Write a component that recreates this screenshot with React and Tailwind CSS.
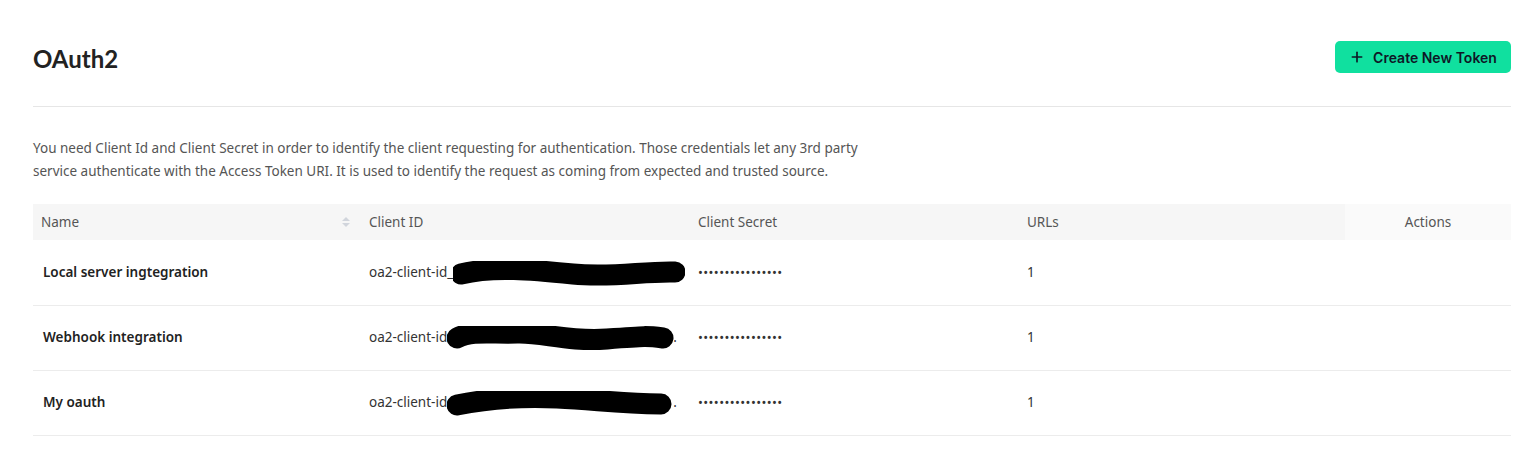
import { Plus } from "lucide-react";

const rows = [
  { name: "Local server ingtegration", prefix: "oa2-client-id_", blob: "M8 13 C 40 5, 80 9, 120 13 S 190 10, 222 11", dot: false },
  { name: "Webhook integration", prefix: "oa2-client-id", blob: "M10 12 C 25 4, 45 8, 70 7 S 120 16, 160 13 S 200 10, 216 12", dot: true },
  { name: "My oauth", prefix: "oa2-client-id", blob: "M10 14 C 40 8, 70 5, 110 7 S 170 12, 214 13", dot: true },
];

const Blob = ({ d }) => (
  <svg width="232" height="26" viewBox="0 0 232 26" className="absolute left-0 top-1/2 -translate-y-1/2">
    <path d={d} stroke="#000" strokeWidth="21" strokeLinecap="round" fill="none" />
  </svg>
);

const SortIcon = () => (
  <svg width="10" height="14" viewBox="0 0 10 14" className="text-gray-300">
    <path d="M1 6 L5 2 L9 6 Z" fill="currentColor" />
    <path d="M1 8 L5 12 L9 8 Z" fill="currentColor" />
  </svg>
);

export default function App() {
  return (
    <div className="bg-white pl-[33px] pr-[25px] pt-[40px] text-[#333]" style={{ fontFamily: '"Noto Sans", sans-serif' }}>
      {/* Header */}
      <div className="flex items-start justify-between border-b border-[#e6e6e6] pb-[29px]">
        <h1 className="mt-[1px] text-[24px] font-bold text-[#222]" style={{ fontFamily: "Lato, sans-serif" }}>
          OAuth2
        </h1>
        <button className="mt-[1px] flex h-[32px] w-[176px] items-center justify-center gap-2 rounded-[5px] bg-[#10e09f] text-[14px] font-semibold text-[#0e1726]" style={{ fontFamily: "Inter, sans-serif" }}>
          <Plus size={16} strokeWidth={2.5} />
          Create New Token
        </button>
      </div>

      {/* Description */}
      <p className="mt-[30px] max-w-[870px] text-[13.5px] leading-[23px] text-[#555]">
        You need Client Id and Client Secret in order to identify the client requesting for authentication. Those credentials let any 3rd party service authenticate with the Access Token URI. It is used to identify the request as coming from expected and trusted source.
      </p>

      {/* Table */}
      <table className="mt-[21px] w-full table-fixed text-[13.5px]">
        <thead>
          <tr className="h-[36px] text-left text-[#555]">
            <th className="w-[327px] bg-[#f6f6f6] pl-[8px] font-normal">
              <div className="flex items-center justify-between pr-[9px]">
                Name
                <SortIcon />
              </div>
            </th>
            <th className="w-[329px] bg-[#f6f6f6] pl-[9px] font-normal">Client ID</th>
            <th className="w-[329px] bg-[#f6f6f6] pl-[9px] font-normal">Client Secret</th>
            <th className="w-[327px] bg-[#f6f6f6] pl-[9px] font-normal">URLs</th>
            <th className="bg-[#fafafa] text-center font-normal">Actions</th>
          </tr>
        </thead>
        <tbody>
          {rows.map((row) => (
            <tr key={row.name} className="h-[65px] border-b border-[#ececec] text-[#333]">
              <td className="pl-[10px] font-semibold text-[#222]">{row.name}</td>
              <td className="pl-[9px]">
                <span className="relative inline-block w-[320px]">
                  {row.prefix}
                  <span className="relative inline-block h-[10px] w-[226px] align-middle">
                    <Blob d={row.blob} />
                  </span>
                  {row.dot && "."}
                </span>
              </td>
              <td className="pl-[9px] text-[13px] tracking-[0.4px]">••••••••••••••••</td>
              <td className="pl-[9px]">1</td>
              <td />
            </tr>
          ))}
        </tbody>
      </table>
      <div className="h-[40px]" />
    </div>
  );
}
